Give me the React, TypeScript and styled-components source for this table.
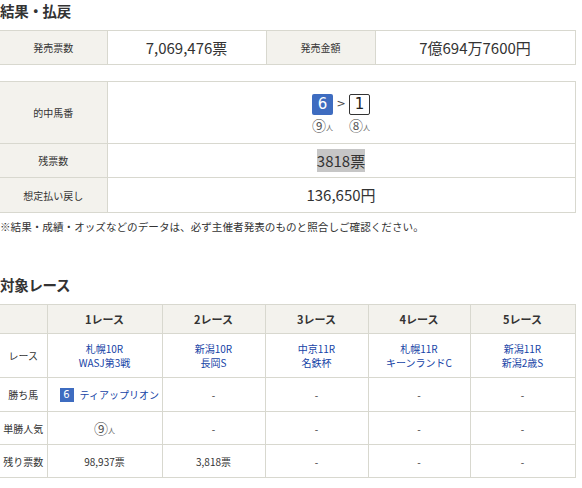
import React from "react";
import styled, { createGlobalStyle } from "styled-components";

const Global = createGlobalStyle`
  html, body { margin: 0; padding: 0; background: #fff; }
  body { font-family: "Noto Sans CJK JP", "DejaVu Sans", sans-serif; color: #333; }
`;

const Page = styled.div`
  width: 575px;
  display: flex;
  flex-direction: column;
`;

const Title = styled.h2<{ $top?: number }>`
  margin: 0;
  padding-top: ${(p) => p.$top ?? 0}px;
  height: 22px;
  line-height: 22px;
  font-size: 14.5px;
  font-weight: bold;
  color: #333;
  letter-spacing: -0.3px;
`;

const Table = styled.table<{ $mt?: number }>`
  width: 575px;
  border-collapse: collapse;
  table-layout: fixed;
  margin-top: ${(p) => p.$mt ?? 0}px;
  border-top: 1px solid #d8d8cf;
`;

const Cell = styled.td<{ $h: number; $label?: boolean; $size?: number; $bold?: boolean }>`
  height: ${(p) => p.$h}px;
  padding: 0;
  border: 1px solid #d8d8cf;
  background: ${(p) => (p.$label ? "#f3f2ed" : "#fff")};
  text-align: center;
  vertical-align: middle;
  font-size: ${(p) => p.$size ?? 10}px;
  font-weight: ${(p) => (p.$bold ? "bold" : "normal")};
  color: #333;
  line-height: 1.3;
  &:first-child { border-left: none; }
`;

const Highlight = styled.span`
  background: #c6c6c6;
  padding: 1px 0;
`;

const HorseRow = styled.div`
  display: inline-grid;
  grid-template-columns: 21px 16px 21px;
  row-gap: 3px;
  align-items: center;
  justify-items: center;
`;

const NumBox = styled.span<{ $filled?: boolean; $size: number; $font: number }>`
  display: inline-flex;
  align-items: center;
  justify-content: center;
  flex-shrink: 0;
  box-sizing: border-box;
  width: ${(p) => p.$size}px;
  height: ${(p) => p.$size}px;
  border-radius: ${(p) => (p.$size > 16 ? 2 : 0)}px;
  background: ${(p) => (p.$filled ? "#3e6cc0" : "#fff")};
  color: ${(p) => (p.$filled ? "#fff" : "#222")};
  border: ${(p) => (p.$filled ? "none" : "1px solid #333")};
  font-size: ${(p) => p.$font}px;
  line-height: 1;
  font-family: "DejaVu Sans", sans-serif;
`;

const Arrow = styled.span`
  font-size: 11px;
  color: #444;
  font-family: "DejaVu Sans", sans-serif;
`;

const Pop = styled.span`
  display: inline-flex;
  align-items: flex-end;
  gap: 0;
  font-size: 14px;
  color: #555;
  line-height: 1;
`;

const PopIcon = styled.span`
  font-size: 7px;
  color: #666;
  line-height: 1;
  margin-bottom: 1px;
`;

const Note = styled.p`
  margin: 7px 0 0;
  font-size: 10.6px;
  color: #333;
  line-height: 14px;
  white-space: nowrap;
`;

const Link = styled.a<{ $block?: boolean }>`
  display: ${(p) => (p.$block ? "block" : "inline")};
  color: #1543a6;
  text-decoration: none;
  font-size: 10px;
  line-height: 14px;
`;

const Winner = styled.div`
  display: flex;
  align-items: center;
  gap: 6px;
  padding-left: 12px;
`;

const Popularity = ({ n }: { n: string }) => (
  <Pop>
    {n}
    <PopIcon>人</PopIcon>
  </Pop>
);

const races = [
  { h: "1レース", a: "札幌10R", b: "WASJ第3戦", sales: "98,937票" },
  { h: "2レース", a: "新潟10R", b: "長岡S", sales: "3,818票" },
  { h: "3レース", a: "中京11R", b: "名鉄杯", sales: "-" },
  { h: "4レース", a: "札幌11R", b: "キーンランドC", sales: "-" },
  { h: "5レース", a: "新潟11R", b: "新潟2歳S", sales: "-" },
];

export default function App() {
  return (
    <Page>
      <Global />
      <Title $top={0}>結果・払戻</Title>
      <Table $mt={8}>
        <colgroup>
          <col style={{ width: 107 }} />
          <col style={{ width: 159 }} />
          <col style={{ width: 109 }} />
          <col style={{ width: 200 }} />
        </colgroup>
        <tbody>
          <tr>
            <Cell $h={33} $label>発売票数</Cell>
            <Cell $h={33} $size={15}>7,069,476票</Cell>
            <Cell $h={33} $label>発売金額</Cell>
            <Cell $h={33} $size={15}>7億694万7600円</Cell>
          </tr>
        </tbody>
      </Table>

      <Table $mt={16}>
        <colgroup>
          <col style={{ width: 107 }} />
          <col style={{ width: 468 }} />
        </colgroup>
        <tbody>
          <tr>
            <Cell $h={61} $label>的中馬番</Cell>
            <Cell $h={61}>
              <HorseRow>
                <NumBox $filled $size={21} $font={15}>6</NumBox>
                <Arrow>&gt;</Arrow>
                <NumBox $size={21} $font={15}>1</NumBox>
                <Popularity n="⑨" />
                <span />
                <Popularity n="⑧" />
              </HorseRow>
            </Cell>
          </tr>
          <tr>
            <Cell $h={33} $label>残票数</Cell>
            <Cell $h={33} $size={15}>
              <Highlight>3818票</Highlight>
            </Cell>
          </tr>
          <tr>
            <Cell $h={34} $label>想定払い戻し</Cell>
            <Cell $h={34} $size={15}>136,650円</Cell>
          </tr>
        </tbody>
      </Table>

      <Note>※結果・成績・オッズなどのデータは、必ず主催者発表のものと照合しご確認ください。</Note>

      <Title $top={40}>対象レース</Title>

      <Table $mt={8}>
        <colgroup>
          <col style={{ width: 47 }} />
          <col style={{ width: 115 }} />
          <col style={{ width: 103 }} />
          <col style={{ width: 103 }} />
          <col style={{ width: 102 }} />
          <col style={{ width: 105 }} />
        </colgroup>
        <thead>
          <tr>
            <Cell as="th" $h={28} $label />
            {races.map((r) => (
              <Cell as="th" key={r.h} $h={28} $label $bold $size={11}>
                {r.h}
              </Cell>
            ))}
          </tr>
        </thead>
        <tbody>
          <tr>
            <Cell $h={43}>レース</Cell>
            {races.map((r) => (
              <Cell key={r.h} $h={43}>
                <Link href="#" $block>{r.a}</Link>
                <Link href="#" $block>{r.b}</Link>
              </Cell>
            ))}
          </tr>
          <tr>
            <Cell $h={33}>勝ち馬</Cell>
            <Cell $h={33}>
              <Winner>
                <NumBox $filled $size={14} $font={10}>6</NumBox>
                <Link href="#">ティアップリオン</Link>
              </Winner>
            </Cell>
            {races.slice(1).map((r) => (
              <Cell key={r.h} $h={33}>-</Cell>
            ))}
          </tr>
          <tr>
            <Cell $h={32}>単勝人気</Cell>
            <Cell $h={32}>
              <Popularity n="⑨" />
            </Cell>
            {races.slice(1).map((r) => (
              <Cell key={r.h} $h={32}>-</Cell>
            ))}
          </tr>
          <tr>
            <Cell $h={32}>残り票数</Cell>
            {races.map((r) => (
              <Cell key={r.h} $h={32}>{r.sales}</Cell>
            ))}
          </tr>
        </tbody>
      </Table>
    </Page>
  );
}
